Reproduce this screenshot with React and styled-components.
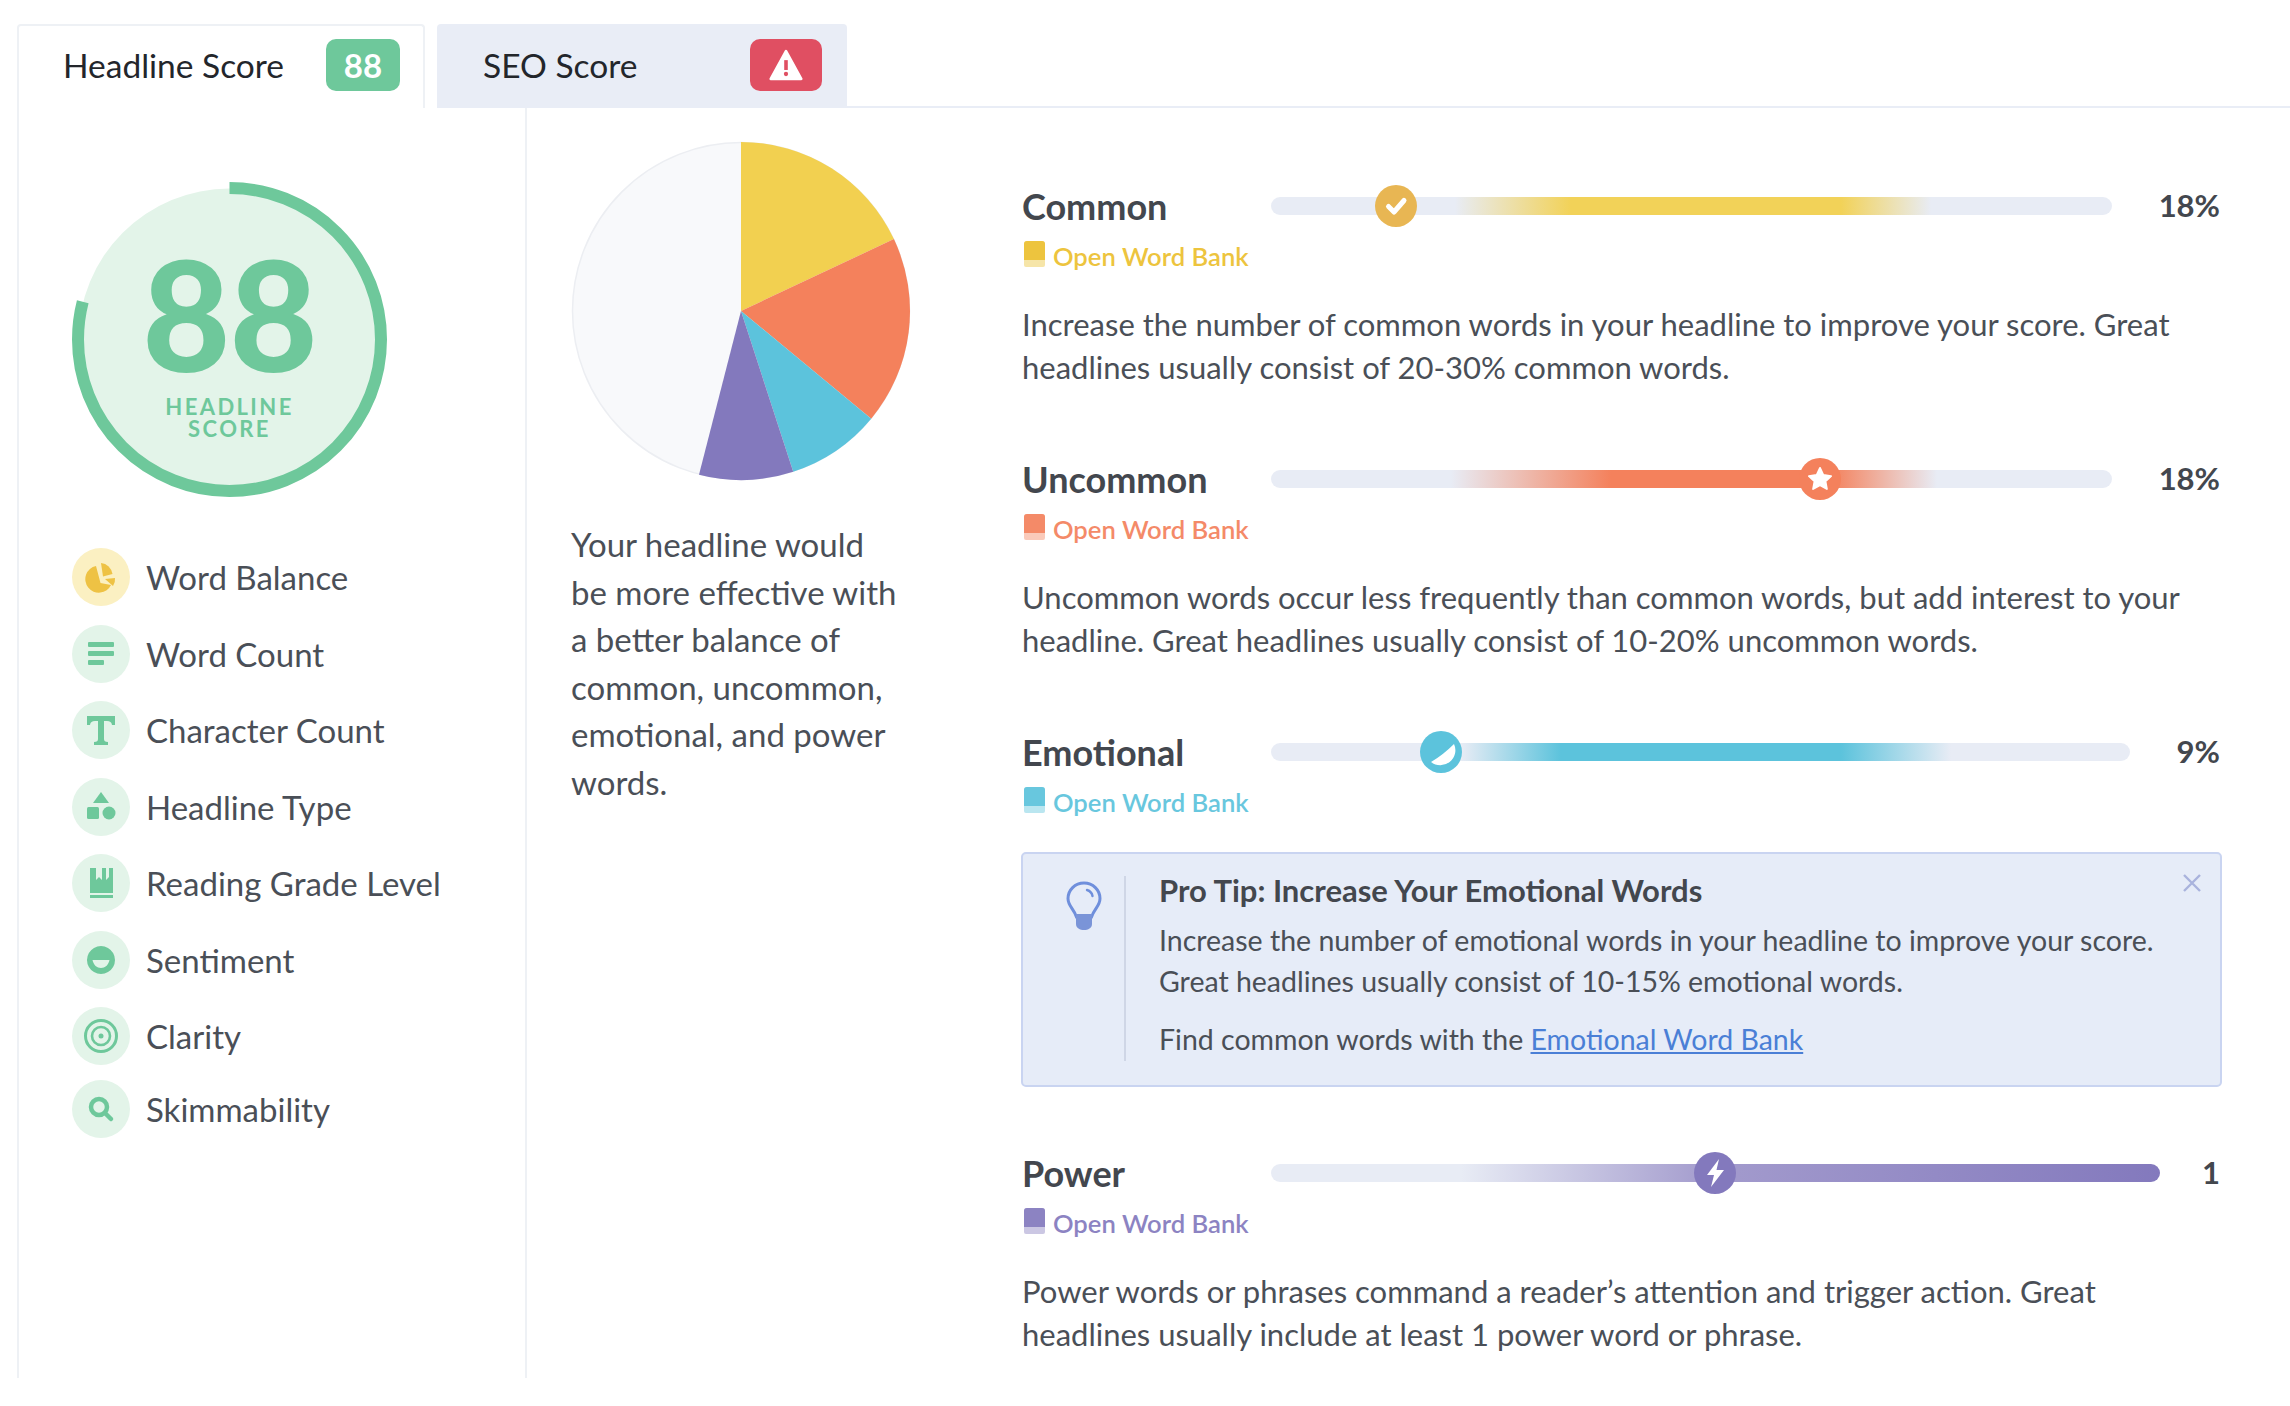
import React from "react";
import styled, { createGlobalStyle } from "styled-components";

const GREEN = "#6ec89b";
const TRACK = "#e8ecf5";

const Global = createGlobalStyle`
  html, body { margin: 0; padding: 0; background: #fff; }
  body { font-family: Lato, "Open Sans", sans-serif; color: #4a4f57; }
  * { box-sizing: border-box; }
`;

const Page = styled.div`
  width: 2290px;
  height: 1406px;
  padding: 24px 0 0 17px;
  overflow: hidden;
  background: #fff;
`;

const TabBar = styled.div`
  display: flex;
  height: 84px;
`;

const Tab = styled.div`
  width: ${(p) => p.$w}px;
  margin-right: ${(p) => p.$mr}px;
  display: flex;
  align-items: center;
  justify-content: space-between;
  padding: 0 23px 4px 44px;
  background: ${(p) => (p.$active ? "#fff" : "#e9edf6")};
  border: 2px solid ${(p) => (p.$active ? "#eef1f5" : "#e9edf6")};
  border-bottom: none;
  border-radius: 4px 4px 0 0;
  font-size: 33.5px;
  color: #23262b;
`;

const TabRule = styled.div`
  flex: 1;
  border-bottom: 2px solid #e9edf6;
`;

const Badge = styled.div`
  width: ${(p) => p.$w}px;
  height: 52px;
  border-radius: 10px;
  background: ${(p) => p.$bg};
  color: #fff;
  font-size: 33px;
  font-weight: 700;
  display: flex;
  align-items: center;
  justify-content: center;
`;

const Body = styled.div`
  display: flex;
  height: 1270px;
`;

const Sidebar = styled.aside`
  width: 510px;
  flex: none;
  border-left: 2px solid #eef1f5;
  border-right: 2px solid #eef1f5;
  padding: 74px 0 0 53px;
`;

const Gauge = styled.div`
  position: relative;
  width: 315px;
  height: 315px;
  margin-bottom: 51px;
`;

const GaugeText = styled.div`
  position: absolute;
  inset: 0;
  display: flex;
  flex-direction: column;
  align-items: center;
  color: ${GREEN};
  text-align: center;
`;

const GaugeNumber = styled.div`
  font-size: 152px;
  font-weight: 900;
  line-height: 136px;
  margin-top: 63px;
  letter-spacing: -1px;
`;

const GaugeLabel = styled.div`
  font-size: 22px;
  font-weight: 700;
  line-height: 22px;
  letter-spacing: 2.4px;
  margin-top: 15px;
`;

const NavRow = styled.div`
  display: flex;
  align-items: center;
  gap: 16px;
  height: 58px;
  margin-bottom: 18.5px;
  font-size: 33px;
  color: #4a4f57;
  &:last-child { margin-top: -3.5px; }
`;

const NavIcon = styled.div`
  width: 58px;
  height: 58px;
  border-radius: 50%;
  flex: none;
  background: ${(p) => p.$bg};
  color: ${(p) => p.$fg};
  display: flex;
  align-items: center;
  justify-content: center;
`;

const Middle = styled.section`
  width: 495px;
  flex: none;
  padding: 33px 0 0 44px;
`;

const PieSvg = styled.svg`
  display: block;
  width: 340px;
  height: 340px;
  margin-bottom: 40px;
`;

const PieText = styled.p`
  margin: 0;
  width: 332px;
  font-size: 33px;
  line-height: 47.5px;
  color: #4a4f57;
`;

const Details = styled.section`
  flex: 1;
  padding: 77px 70px 0 0;
`;

const Metric = styled.div`
  margin-bottom: ${(p) => (p.$tight ? 0 : 69)}px;
`;

const MetricHead = styled.div`
  display: flex;
  align-items: center;
  height: 42px;
`;

const MetricName = styled.div`
  width: 249px;
  flex: none;
  font-size: 36px;
  font-weight: 700;
  color: #43474e;
`;

const Bar = styled.div`
  position: relative;
  flex: 1;
  height: 18px;
  border-radius: 9px;
  background: ${(p) => p.$fill};
`;

const Thumb = styled.div`
  position: absolute;
  top: 50%;
  left: ${(p) => p.$at}px;
  width: 42px;
  height: 42px;
  margin: -21px 0 0 -21px;
  border-radius: 50%;
  background: ${(p) => p.$bg};
  display: flex;
  align-items: center;
  justify-content: center;
`;

const MetricValue = styled.div`
  margin-left: ${(p) => p.$gap}px;
  padding-bottom: 2px;
  font-size: 31px;
  font-weight: 700;
  color: #43474e;
`;

const BankLink = styled.div`
  display: flex;
  align-items: center;
  gap: 8px;
  height: 26px;
  margin-top: 16px;
  padding-left: 2px;
  font-size: 25.6px;
  font-weight: 600;
  color: ${(p) => p.$c};
  opacity: 0.92;
`;

const BookSvg = styled.svg`
  flex: none;
  margin-bottom: 4px;
`;

const Para = styled.p`
  margin: 34px 0 0;
  font-size: 31px;
  line-height: 43px;
  color: #4a4f57;
`;

const Tip = styled.div`
  position: relative;
  display: flex;
  margin: 37px -2px 65px -1px;
  height: 235px;
  padding: 22px 0 24px;
  border: 2px solid #c9d4f1;
  border-radius: 5px;
  background: #e6ecf8;
`;

const TipIconCol = styled.div`
  width: 103px;
  flex: none;
  border-right: 2px solid #cfd6e6;
  padding: 5px 0 0 43px;
`;

const TipBody = styled.div`
  padding-left: 33px;
`;

const TipTitle = styled.div`
  font-size: 31px;
  font-weight: 700;
  line-height: 28px;
  color: #43474e;
`;

const TipText = styled.p`
  margin: ${(p) => p.$mt}px 0 0;
  font-size: 28.5px;
  line-height: 41px;
  color: #4a4f57;
`;

const TipLink = styled.a`
  color: #4a7fd6;
  text-decoration: underline;
`;

const Close = styled.svg`
  position: absolute;
  top: 19px;
  right: 18px;
  width: 20px;
  height: 20px;
`;

/* ---------- drawings ---------- */

const pt = (cx, cy, r, deg) => {
  const a = (deg * Math.PI) / 180;
  return [cx + r * Math.sin(a), cy - r * Math.cos(a)];
};
const wedge = (from, to, r = 169) => {
  const [x1, y1] = pt(170, 170, r, from);
  const [x2, y2] = pt(170, 170, r, to);
  return `M170 170 L${x1} ${y1} A${r} ${r} 0 ${to - from > 180 ? 1 : 0} 1 ${x2} ${y2} Z`;
};

const Pie = () => (
  <PieSvg viewBox="0 0 340 340">
    <circle cx="170" cy="170" r="168.5" fill="#f8f9fb" stroke="#eceef2" strokeWidth="1.5" />
    <path d={wedge(0, 64.8)} fill="#f2d050" />
    <path d={wedge(64.8, 129.6)} fill="#f4815c" />
    <path d={wedge(129.6, 162)} fill="#5cc3dc" />
    <path d={wedge(162, 194.4)} fill="#8379bd" />
  </PieSvg>
);

const GaugeRing = () => (
  <svg width="315" height="315" viewBox="0 0 315 315">
    <circle cx="157.5" cy="157.5" r="151" fill="#e3f4e9" />
    <circle
      cx="157.5"
      cy="157.5"
      r="151.5"
      fill="none"
      stroke={GREEN}
      strokeWidth="12"
      pathLength="100"
      strokeDasharray="79 100"
      transform="rotate(-90 157.5 157.5)"
    />
  </svg>
);

const I = ({ children }) => (
  <svg width="34" height="34" viewBox="0 0 34 34" fill="currentColor">
    {children}
  </svg>
);

const icons = {
  balance: (
    <I>
      <path d="M13 5 A13.5 13.5 0 1 0 28 24 L17.5 22 Z" transform="translate(-1 1)" />
      <path d="M17 3 A13 13 0 0 1 28.5 14 L19 16.5 Z" />
      <path d="M21 19 L31 18 A12 12 0 0 1 29 26 Z" />
    </I>
  ),
  lines: (
    <I>
      <rect x="4" y="5" width="26" height="5" rx="1" />
      <rect x="4" y="14" width="26" height="5" rx="1" />
      <rect x="4" y="23" width="16" height="5" rx="1" />
    </I>
  ),
  type: (
    <I>
      <path d="M3 3 H31 V12 H28 C27.5 9 26 8 23 8 H20 V26 C20 28 21 29 24 29 V32 H10 V29 C13 29 14 28 14 26 V8 H11 C8 8 6.5 9 6 12 H3 Z" />
    </I>
  ),
  shapes: (
    <I>
      <path d="M17 2 L25 13 H9 Z" />
      <rect x="3" y="17" width="12" height="12" rx="1.5" />
      <circle cx="25" cy="23" r="6.5" />
    </I>
  ),
  book: (
    <I>
      <path d="M6 2 H12 V14 L15 11 L18 14 V2 H22 V14 L25 11 L25 2 H29 V27 H6 Z" />
      <rect x="6" y="29" width="23" height="3" />
    </I>
  ),
  smile: (
    <I>
      <path
        fillRule="evenodd"
        d="M17 3 A14 14 0 1 1 16.99 3 Z M8.5 17 C9.5 22 13 25 17 25 C21 25 24.5 22 25.5 17 Z"
      />
    </I>
  ),
  target: (
    <svg width="36" height="36" viewBox="0 0 36 36" fill="none" stroke="currentColor">
      <circle cx="18" cy="18" r="15.5" strokeWidth="3" />
      <circle cx="18" cy="18" r="9" strokeWidth="2.6" />
      <circle cx="18" cy="18" r="2.5" fill="currentColor" stroke="none" />
    </svg>
  ),
  search: (
    <svg width="34" height="34" viewBox="0 0 34 34" fill="none" stroke="currentColor" strokeWidth="4.5" strokeLinecap="round">
      <circle cx="15" cy="15" r="8" />
      <path d="M21 21 L27 27" />
    </svg>
  ),
};

const BookIcon = ({ c }) => (
  <BookSvg width="21" height="26" viewBox="0 0 21 26">
    <path d="M3 0 H18 A3 3 0 0 1 21 3 V24 A2 2 0 0 1 19 26 H2 A2 2 0 0 1 0 24 V3 A3 3 0 0 1 3 0 Z" fill={c} opacity="0.45" />
    <path d="M3 0 H18 A3 3 0 0 1 21 3 V19 H0 V3 A3 3 0 0 1 3 0 Z" fill={c} />
  </BookSvg>
);

const thumbIcons = {
  check: (
    <svg width="24" height="24" viewBox="0 0 24 24" fill="none" stroke="#fff" strokeWidth="5" strokeLinecap="round" strokeLinejoin="round">
      <path d="M4.5 12.5 L10 18 L20 6.5" />
    </svg>
  ),
  star: (
    <svg width="28" height="28" viewBox="0 0 24 24" fill="#fff" stroke="#fff" strokeWidth="1.6" strokeLinejoin="round">
      <path d="M12 2.5 L14.9 8.6 L21.5 9.5 L16.7 14 L17.9 20.6 L12 17.4 L6.1 20.6 L7.3 14 L2.5 9.5 L9.1 8.6 Z" />
    </svg>
  ),
  drop: (
    <svg width="42" height="42" viewBox="0 0 42 42" fill="#fff">
      <path d="M34 13 A15 15 0 0 1 11 31 Q23 24 34 13 Z" />
    </svg>
  ),
  bolt: (
    <svg width="26" height="30" viewBox="0 0 26 30" fill="#fff">
      <path d="M17 1 L5 17 H12 L9 29 L22 12 H14.5 Z" />
    </svg>
  ),
};

const Lamp = () => (
  <svg width="36" height="50" viewBox="0 0 36 50" fill="none">
    <path
      d="M18 2 C9 2 2 9 2 17.5 C2 25 8 28 10.5 36 H25.5 C28 28 34 25 34 17.5 C34 9 27 2 18 2 Z"
      stroke="#6f8fdc"
      strokeWidth="3"
    />
    <path d="M21 9 C24 10 26 12 26.5 15" stroke="#6f8fdc" strokeWidth="2.4" strokeLinecap="round" />
    <path d="M10 33 H26 V43 C26 47 22 49 18 49 C14 49 10 47 10 43 Z" fill="#7a94d8" />
  </svg>
);

/* ---------- data ---------- */

const nav = [
  ["Word Balance", "balance", "#fbf0c2", "#eec244"],
  ["Word Count", "lines", "#e3f4e9", GREEN],
  ["Character Count", "type", "#e3f4e9", GREEN],
  ["Headline Type", "shapes", "#e3f4e9", GREEN],
  ["Reading Grade Level", "book", "#e3f4e9", GREEN],
  ["Sentiment", "smile", "#e3f4e9", GREEN],
  ["Clarity", "target", "#e3f4e9", GREEN],
  ["Skimmability", "search", "#e3f4e9", GREEN],
];

const fade = (c, a, b, d, e) =>
  `linear-gradient(90deg, ${TRACK} ${a}px, ${c} ${b}px, ${c} ${d}px, ${TRACK} ${e}px)`;

const metrics = [
  {
    name: "Common",
    value: "18%",
    gap: 47,
    color: "#ecc02e",
    thumb: "#e8b653",
    icon: "check",
    at: 125,
    fill: fade("#f2d258", 184, 300, 570, 660),
    text: "Increase the number of common words in your headline to improve your score. Great headlines usually consist of 20-30% common words.",
  },
  {
    name: "Uncommon",
    value: "18%",
    gap: 47,
    color: "#f4815c",
    thumb: "#f4815c",
    icon: "star",
    at: 549,
    fill: fade("#f4815c", 180, 340, 560, 666),
    text: "Uncommon words occur less frequently than common words, but add interest to your headline. Great headlines usually consist of 10-20% uncommon words.",
  },
  {
    name: "Emotional",
    value: "9%",
    gap: 47,
    color: "#5cc3dc",
    thumb: "#5cc3dc",
    icon: "drop",
    at: 170,
    fill: fade("#5cc3dc", 190, 290, 570, 680),
    tight: true,
  },
  {
    name: "Power",
    value: "1",
    gap: 42,
    color: "#8379bd",
    thumb: "#8379bd",
    icon: "bolt",
    at: 444,
    fill: `linear-gradient(90deg, ${TRACK} 190px, #a39bcd 440px, #8379bd 889px)`,
    text: "Power words or phrases command a reader’s attention and trigger action. Great headlines usually include at least 1 power word or phrase.",
  },
];

const MetricBlock = ({ m }) => (
  <Metric $tight={m.tight}>
    <MetricHead>
      <MetricName>{m.name}</MetricName>
      <Bar $fill={m.fill}>
        <Thumb $at={m.at} $bg={m.thumb}>
          {thumbIcons[m.icon]}
        </Thumb>
      </Bar>
      <MetricValue $gap={m.gap}>{m.value}</MetricValue>
    </MetricHead>
    <BankLink $c={m.color}>
      <BookIcon c={m.color} />
      Open Word Bank
    </BankLink>
    {m.text && <Para>{m.text}</Para>}
  </Metric>
);

export default function App() {
  return (
    <Page>
      <Global />
      <TabBar>
        <Tab $active $w={408} $mr={12}>
          Headline Score
          <Badge $w={74} $bg={GREEN}>88</Badge>
        </Tab>
        <Tab $w={410} $mr={0}>
          SEO Score
          <Badge $w={72} $bg="#e04f62">
            <svg width="34" height="33" viewBox="0 0 38 36">
              <path d="M19 2 L36 33 H2 Z" fill="#fff" stroke="#fff" strokeWidth="3" strokeLinejoin="round" />
              <rect x="17" y="12" width="4" height="11" fill="#e04f62" />
              <circle cx="19" cy="27.5" r="2.4" fill="#e04f62" />
            </svg>
          </Badge>
        </Tab>
        <TabRule />
      </TabBar>
      <Body>
        <Sidebar>
          <Gauge>
            <GaugeRing />
            <GaugeText>
              <GaugeNumber>88</GaugeNumber>
              <GaugeLabel>
                HEADLINE
                <br />
                SCORE
              </GaugeLabel>
            </GaugeText>
          </Gauge>
          {nav.map(([label, icon, bg, fg]) => (
            <NavRow key={label}>
              <NavIcon $bg={bg} $fg={fg}>{icons[icon]}</NavIcon>
              {label}
            </NavRow>
          ))}
        </Sidebar>
        <Middle>
          <Pie />
          <PieText>
            Your headline would be more effective with a better balance of common, uncommon, emotional, and power words.
          </PieText>
        </Middle>
        <Details>
          <MetricBlock m={metrics[0]} />
          <MetricBlock m={metrics[1]} />
          <MetricBlock m={metrics[2]} />
          <Tip>
            <TipIconCol>
              <Lamp />
            </TipIconCol>
            <TipBody>
              <TipTitle>Pro Tip: Increase Your Emotional Words</TipTitle>
              <TipText $mt={16}>
                Increase the number of emotional words in your headline to improve your score.
                <br />
                Great headlines usually consist of 10-15% emotional words.
              </TipText>
              <TipText $mt={17}>
                Find common words with the <TipLink>Emotional Word Bank</TipLink>
              </TipText>
            </TipBody>
            <Close viewBox="0 0 20 20" fill="none" stroke="#a9b3dd" strokeWidth="2.4">
              <path d="M2 2 L18 18 M18 2 L2 18" />
            </Close>
          </Tip>
          <MetricBlock m={metrics[3]} />
        </Details>
      </Body>
    </Page>
  );
}
